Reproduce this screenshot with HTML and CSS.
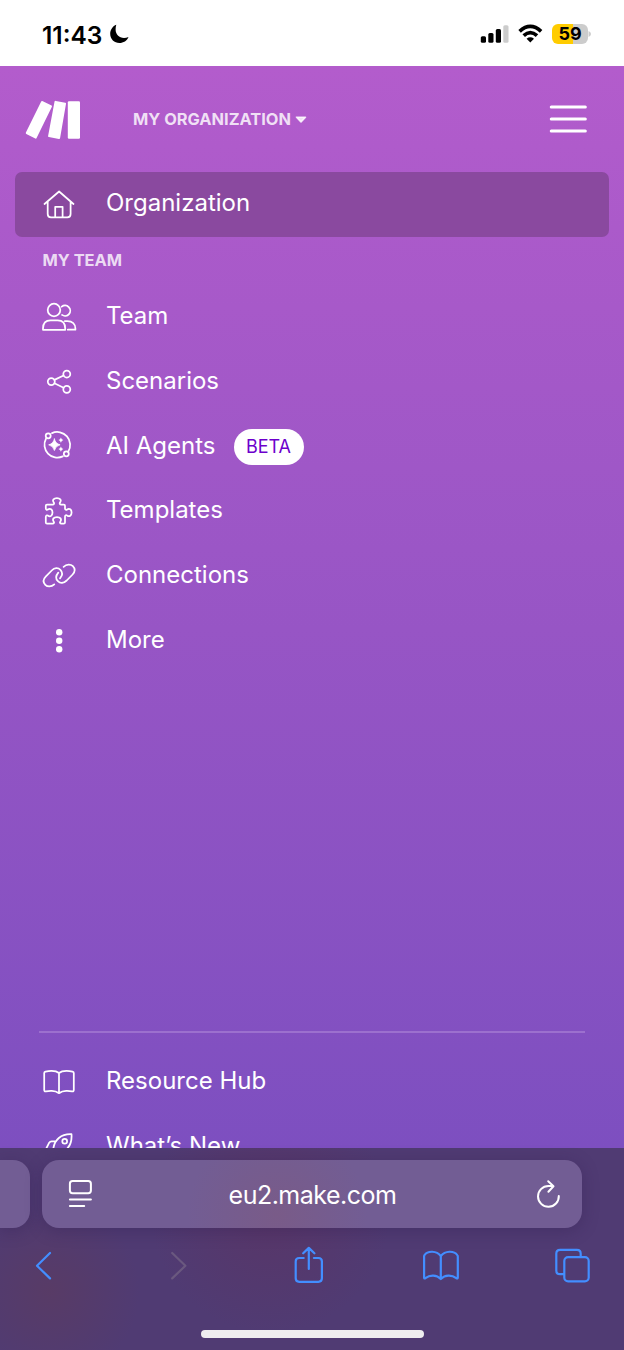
FILE: index.html
```html
<!DOCTYPE html>
<html lang="en">
<head>
<meta charset="utf-8">
<title>Make</title>
<link rel="stylesheet" href="styles.css">
</head>
<body>
<div class="screen">
  <header class="status">
    <div class="clock">
      <span class="time">11:43</span>
      <svg class="moon" viewBox="109 24 20 20"><path fill="#000" d="M116.300 24.800C113 26 110.200 29.700 110.200 34C110.200 39 114.300 43 119.400 43C123.400 43 127.200 40.700 128.500 37C127 37.600 125.500 37.900 124 37.900C119 37.900 115.600 34.300 115.600 29.600C115.600 27.900 115.800 26.300 116.300 24.800Z"/></svg>
    </div>
    <div class="indicators">
      <svg class="signal" viewBox="480 24 30 20"><rect x="480.800" y="36.200" width="5.200" height="6.500" rx="1.500"/><rect x="488.300" y="33" width="5.200" height="9.700" rx="1.500"/><rect x="495.800" y="29" width="5.200" height="13.700" rx="1.500"/><rect x="503.300" y="25.200" width="5.200" height="17.500" rx="1.500" fill="#ccc"/></svg>
      <svg class="wifi" viewBox="518 24 25 20"><g fill="none" stroke="#000" stroke-width="3.700"><path d="M519.600 31.300Q530.300 21.500 541.100 31.300"/><path d="M523.700 35.700Q530.300 29.600 537 35.700"/></g><path d="M526.600 38.700Q530.300 35.900 534 38.700L530.300 42.600Z"/></svg>
      <div class="battery"><span>59</span></div>
      <svg class="tip" viewBox="0 0 3 8"><path fill="#ccc" d="M.5 1Q3 2 3 4T.5 7Z"/></svg>
    </div>
  </header>

  <main class="app">
    <div class="topbar">
      <svg class="logo" viewBox="25 100 56 40"><g fill="#fff"><path d="M42.300 101L51.600 105.500Q52.200 106 51.900 106.700L36.600 138Q36.200 139 35.300 138.500L26.300 134Q25.400 133.500 25.900 132.600L41.200 101.600Q41.600 100.700 42.300 101Z"/><path d="M55.800 100.900L65.300 102.700Q66.200 102.900 66 103.800L60.100 138Q59.900 139.100 58.900 138.900L48.800 137.100Q47.900 136.900 48.100 136L54.500 101.700Q54.700 100.700 55.800 100.900Z"/><rect x="67.800" y="101.200" width="12.200" height="37.600" rx="1.200"/></g></svg>
      <div class="org-switch"><span>MY ORGANIZATION</span><svg class="caret" viewBox="0 0 12 8"><path d="M1.500 1.200H10.500L6 6Z" fill="currentColor" stroke="currentColor" stroke-width="1.600" stroke-linejoin="round"/></svg></div>
      <svg class="menu" viewBox="549 104 38 30"><path d="M551.300 107H585.300M551.300 119H585.300M551.300 131H585.300" fill="none" stroke="#fff" stroke-width="3.100" stroke-linecap="round"/></svg>
    </div>

    <nav class="nav">
      <a class="row active">
        <svg class="icon" viewBox="39 184.500 40 40"><path d="M44.500 203.500L59.100 191L73.500 203.500M47.700 201V213.600Q47.700 216.900 51 216.900H67.300Q70.600 216.900 70.600 213.600V201M55.200 216.700V206.300H62.600V216.700"/></svg>
        <span class="label">Organization</span>
      </a>
      <h2 class="heading">MY TEAM</h2>
      <a class="row">
        <svg class="icon" viewBox="39 297 40 40"><circle cx="54" cy="310" r="6.300"/><path d="M61.700 306.700A5.200 5.200 0 1 1 62 314.900M43 329.800V328.500C43 323.200 46 320.300 50.500 320.300H57.700C62.300 320.300 65.200 323.200 65.200 328.500V329.800ZM64.800 321H67.400C72.300 321 75.400 324 75.400 328.500V329.700H67.800"/></svg>
        <span class="label">Team</span>
      </a>
      <a class="row">
        <svg class="icon" viewBox="39 361.800 40 40"><circle cx="51.300" cy="381.400" r="3.500"/><circle cx="66.800" cy="373.800" r="3.500"/><circle cx="66.800" cy="389.100" r="3.500"/><path d="M54.400 379.700L63.600 375.300M54.400 383L63.600 387.500"/></svg>
        <span class="label">Scenarios</span>
      </a>
      <a class="row">
        <svg class="icon" viewBox="39 426.600 40 40"><path d="M52 432.700A12.900 12.900 0 0 1 68.200 451.300M62.800 456A12.900 12.900 0 0 1 46 438.200"/><circle cx="48.200" cy="435.400" r="2.500"/><circle cx="66.300" cy="453.400" r="2.500"/><g class="solid"><path d="M54.400 438.600Q55.500 443.400 60.100 444.400Q55.500 445.400 54.400 450.100Q53.300 445.400 48.700 444.400Q53.300 443.400 54.400 438.600Z" stroke="#fff" stroke-width=".8"/><path d="M60.900 437.100Q61.400 439.200 63.400 439.700Q61.400 440.200 60.900 442.300Q60.400 440.200 58.400 439.700Q60.400 439.200 60.900 437.100Z"/><path d="M60.900 446.100Q61.400 448.200 63.400 448.700Q61.400 449.200 60.900 451.300Q60.400 449.200 58.400 448.700Q60.400 448.200 60.900 446.100Z"/></g></svg>
        <span class="label">AI Agents</span><span class="badge">BETA</span>
      </a>
      <a class="row">
        <svg class="icon" viewBox="39 491.400 40 40"><path d="M47 504.900H52.500C54.200 504.900 54.400 503.700 53.700 502.800C52 500.400 53.800 498.500 56.900 498.500S61.800 500.400 60.100 502.800C59.400 503.700 59.600 504.900 61.300 504.900H63.800Q65 504.900 65 506.100V508.700C65 510.400 66.200 510.600 67.100 509.900C69.500 508.200 71.600 509.900 71.600 512.900S69.500 517.600 67.100 515.900C66.200 515.200 65 515.400 65 517.100V522.800Q65 524 63.800 524H61.500C59.800 524 59.700 522.800 60.300 522C62 519.500 60.300 517.400 57 517.400S52 519.500 53.700 522C54.300 522.800 54.200 524 52.500 524H47Q45.800 524 45.800 522.800V517.400C45.800 515.700 46.900 515.400 47.800 516C50.300 517.700 52.500 516 52.500 512.900S50.300 508.200 47.800 509.900C46.900 510.500 45.800 510.200 45.800 508.500V506.100Q45.800 504.900 47 504.900Z"/></svg>
        <span class="label">Templates</span>
      </a>
      <a class="row">
        <svg class="icon" viewBox="39 556.200 40 40"><path d="M54.300 584.600C51.200 587.400 47.400 587.200 45.300 585C43 582.600 43.200 579.400 45.700 576.800L51.700 570.700C54.500 567.900 58.100 567.700 60.400 570C62.700 572.300 62.700 575.400 60 578.600M63.600 567C66.600 564.200 70.700 564.300 72.900 566.400C75.200 568.800 75.100 572 72.600 574.700L66.700 580.700C63.800 583.500 60.200 583.700 57.900 581.400C55.600 579.100 55.600 576 58.300 572.800"/></svg>
        <span class="label">Connections</span>
      </a>
      <a class="row">
        <svg class="icon" viewBox="39 621 40 40"><g class="solid"><circle cx="59.200" cy="632.200" r="3.200"/><circle cx="59.200" cy="640.800" r="3.200"/><circle cx="59.200" cy="649.300" r="3.200"/></g></svg>
        <span class="label">More</span>
      </a>
    </nav>

    <nav class="resources">
      <a class="row">
        <svg class="icon" viewBox="39 1063 40 40"><path d="M59 1073Q56.500 1070.900 51.500 1070.900Q48.500 1070.900 45.500 1071.600Q44.200 1071.900 44.200 1073V1090Q44.200 1091.700 46 1091.300Q49 1090.800 51.800 1090.900Q56 1091 59 1093.200Q62 1091 66.200 1090.900Q69 1090.800 72 1091.300Q73.800 1091.700 73.800 1090V1073Q73.800 1071.900 72.500 1071.600Q69.500 1070.900 66.500 1070.900Q61.500 1070.900 59 1073V1093"/></svg>
        <span class="label">Resource Hub</span>
      </a>
      <a class="row">
        <svg class="icon" viewBox="39 1128 40 40"><path d="M53.300 1149C54.300 1140 61 1133.700 71.500 1134.200C72.300 1144.500 67 1151 58.500 1154ZM56 1141.300H51.600Q50 1141.300 49.200 1142.700L46 1149H53.500M65 1150V1154L58.500 1160V1154"/><circle cx="64.700" cy="1141.200" r="2.400"/></svg>
        <span class="label">What’s New</span>
      </a>
    </nav>
  </main>

  <footer class="browser">
    <div class="tabs-strip">
      <div class="tab-prev"></div>
      <div class="address">
        <svg class="reader" viewBox="68 1180 26 30"><g fill="none" stroke="#fff" stroke-width="2" stroke-linecap="round"><rect x="69.900" y="1182" width="21" height="12.200" rx="2.700"/><path d="M69.900 1200.600H90.900M69.900 1206.900H84.200"/></g></svg>
        <span class="url">eu2.make.com</span>
        <svg class="reload" viewBox="536 1178 26 30"><g fill="none" stroke="#fff" stroke-width="2" stroke-linecap="round" stroke-linejoin="round"><path d="M558.800 1195A10.400 10.400 0 1 1 548.400 1185H553.200M548.200 1180.300L553.500 1185.200L548.400 1190.700"/></g></svg>
      </div>
    </div>
    <div class="toolbar">
      <svg class="tool" viewBox="22 1243 44 44"><path d="M50 1253L37 1265.700L50 1278.400"/></svg>
      <svg class="tool disabled" viewBox="154.300 1243 44 44"><path d="M172.500 1253L185.700 1265.700L172.500 1278.400"/></svg>
      <svg class="tool" viewBox="286.300 1243 44 44"><path d="M304 1258H299.500Q296 1258 296 1261.500V1278.300Q296 1281.800 299.500 1281.800H318.700Q322.200 1281.800 322.200 1278.300V1261.500Q322.200 1258 318.700 1258H314.200M309.100 1269V1248.300M303.500 1253.300L309.100 1247.900L314.700 1253.300"/></svg>
      <svg class="tool" viewBox="418.900 1243 44 44"><path d="M440.700 1256C436.500 1250.500 427.500 1250.500 424.500 1255Q424 1255.500 424 1256.500V1277.500Q424 1279 425.300 1278.200C430 1274.500 436.500 1274.800 440.700 1279C444.900 1274.800 451.400 1274.500 456.200 1278.200Q457.700 1279 457.700 1277.500V1256.500Q457.700 1255.500 457.100 1255C454 1250.500 445 1250.500 440.700 1256V1278.500"/></svg>
      <svg class="tool" viewBox="551.400 1243 44 44"><path d="M564 1274.200H560.500Q556.700 1274.200 556.700 1270.400V1253.700Q556.700 1249.900 560.500 1249.900H577.300Q581.100 1249.900 581.100 1253.700V1257"/><rect x="564.700" y="1257.200" width="24.400" height="24.200" rx="3.800"/></svg>
    </div>
    <div class="home"></div>
  </footer>
</div>
</body>
</html>
```
FILE: styles.css
```css
* { box-sizing: border-box; }
body { margin: 0; font-family: Inter, "Liberation Sans", sans-serif; }
svg { display: block; flex: none; }

.screen { width: 624px; height: 1350px; display: flex; flex-direction: column; overflow: hidden; }

.status { height: 66px; flex: none; display: flex; justify-content: space-between; padding: 24px 33px 0 42px; background: #fff; color: #000; }
.clock { display: flex; gap: 6px; height: 20px; align-items: center; }
.time { width: 61px; padding-top: 1px; font-size: 24.5px; font-weight: 600; line-height: 20px; white-space: nowrap; }
.moon { width: 20px; height: 20px; }
.indicators { display: flex; height: 20px; }
.signal { width: 30px; height: 20px; margin-right: 8px; }
.wifi { width: 25px; height: 20px; margin-right: 9px; }
.battery { width: 36px; height: 20px; border-radius: 6px; background: linear-gradient(90deg, #fc0 0 21px, #ccc 21px); font-size: 18px; font-weight: 700; line-height: 20px; text-align: center; }
.tip { width: 3px; height: 8px; margin-top: 6px; }

.app { height: 1082px; flex: none; display: flex; flex-direction: column; overflow: hidden; background: linear-gradient(#b35ccc, #9755c5 52%, #7d4fc0); color: #fff; }
.topbar { height: 106px; flex: none; display: flex; align-items: center; padding: 0 37px 0 25px; }
.logo { width: 56px; height: 40px; margin-top: 2px; }
.org-switch { display: flex; align-items: center; gap: 4px; margin-left: 52px; color: rgba(255, 255, 255, .82); font-size: 16.4px; font-weight: 700; white-space: nowrap; }
.caret { width: 12px; height: 8px; margin-top: 1px; }
.menu { width: 38px; height: 30px; margin-left: auto; }

.nav { display: flex; flex-direction: column; }
.row { height: 64.8px; flex: none; display: flex; align-items: center; padding-left: 39px; }
.active { height: 65px; margin: 0 15px; padding-left: 24px; border-radius: 7px; background: #8a499f; }
.icon { width: 40px; height: 40px; fill: none; stroke: #fff; stroke-width: 1.75; stroke-linejoin: round; stroke-linecap: round; overflow: visible; }
.solid { fill: #fff; stroke: none; }
.label { margin-left: 27px; padding-bottom: 4px; font-size: 24px; line-height: 30px; white-space: nowrap; }
.nav .row:not(.active) .label { padding-bottom: 2px; }
.heading { height: 47.6px; margin: 0 0 0 42.5px; font-size: 16.4px; font-weight: 700; line-height: 47px; color: rgba(255, 255, 255, .8); }
.badge { width: 70px; height: 36px; margin: 1px 0 0 18px; border-radius: 18px; background: #fff; color: #6d00cc; font-size: 18px; line-height: 36px; text-align: center; }
.resources { margin: 357.5px 39px 0; padding-top: 18px; border-top: 2px solid #9c70ce; }
.resources .row { padding-left: 0; }

.browser { height: 202px; flex: none; display: flex; flex-direction: column; padding-top: 12px; background: radial-gradient(circle at 50px 143px, #583b66, transparent 90px), radial-gradient(circle at 270px 65px, #583668, transparent 120px), #503b73; color: #fff; }
.tabs-strip { display: flex; gap: 12px; height: 68px; }
.tab-prev { width: 30px; border-radius: 0 17px 17px 0; background: #725d94; box-shadow: 0 3px 16px rgba(50, 30, 80, .35); }
.address { width: 540px; display: flex; align-items: center; justify-content: space-between; padding: 0 20px 0 26px; border-radius: 17px; background: radial-gradient(circle at 235px 55px, #795b88, transparent 90px), #725d94; box-shadow: 0 3px 16px rgba(50, 30, 80, .35); }
.reader, .reload { width: 26px; height: 30px; }
.url { margin-right: 5px; padding-top: 1px; font-size: 25px; letter-spacing: -.5px; }
.toolbar { height: 74px; display: flex; justify-content: space-between; padding: 15px 29px 0 21.5px; }
.tool { width: 44px; height: 44px; fill: none; stroke: #438eff; stroke-width: 2.2; stroke-linecap: round; stroke-linejoin: round; }
.disabled { stroke: #6a587f; }
.home { width: 223px; height: 8px; margin: 28px auto 0; border-radius: 4px; background: #eeedef; }
```
